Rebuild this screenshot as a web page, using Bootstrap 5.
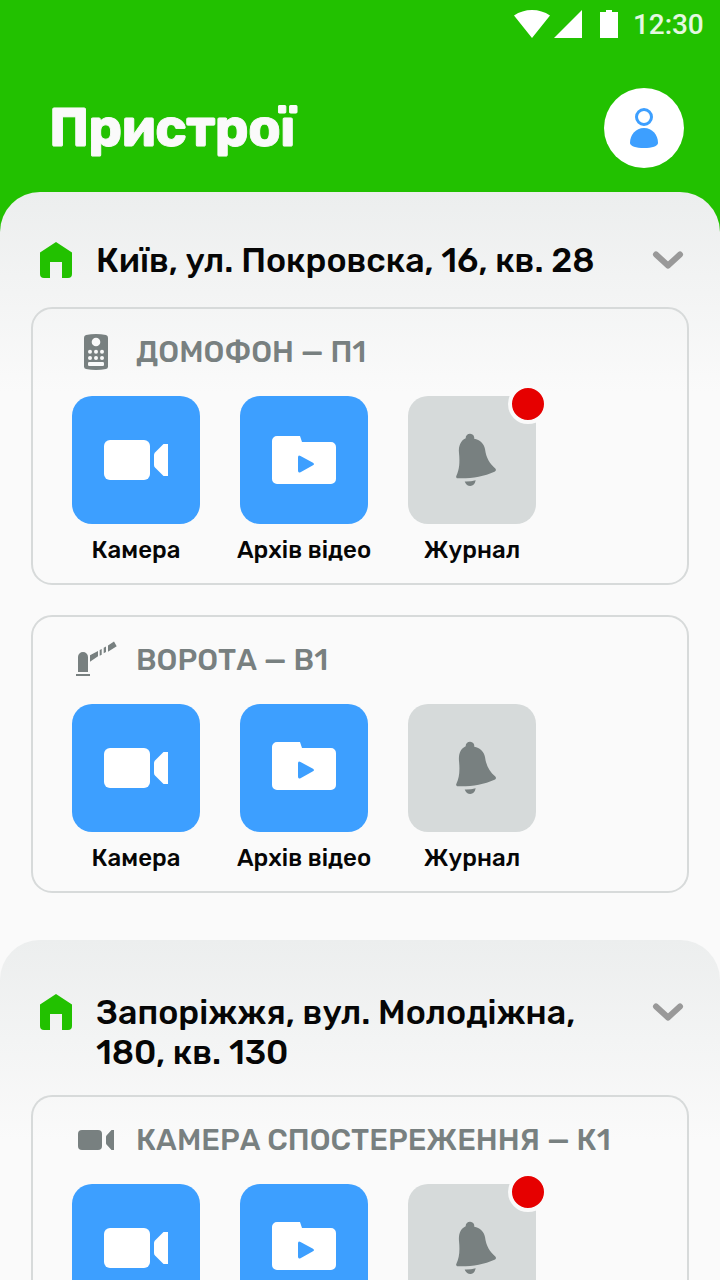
<!DOCTYPE html>
<html lang="uk">
<head>
<meta charset="utf-8">
<meta name="viewport" content="width=device-width, initial-scale=1">
<title>Пристрої</title>
<link href="https://cdn.jsdelivr.net/npm/bootstrap@5.3.0/dist/css/bootstrap.min.css" rel="stylesheet">
<style>
  html, body { height: 1280px; overflow: hidden; }
  body { background: #22c100; font-family: Rubik, Roboto, "Liberation Sans", sans-serif; color: #060606; }
  svg { display: block; flex: none; }
  .status { height: 48px; padding: 0 16px 0 514px; color: #e4f8e0; }
  .clock { font: 500 28px/48px Roboto, sans-serif; margin-left: 15px; letter-spacing: -.1px; padding-top: 1px; white-space: nowrap; }
  .topbar { height: 144px; padding: 16px 36px 0 49px; }
  .title { font-size: 54px; font-weight: 700; line-height: 64px; color: #fafafa; letter-spacing: -.9px; -webkit-text-stroke: .9px #fafafa; }
  .avatar { width: 80px; height: 80px; }
  .place { border-radius: 40px 40px 0 0; padding: 49px 31px 0; background: #fafafa linear-gradient(#eceeee, #fafafa 200px) no-repeat; }
  .first { height: 748px; }
  .under { background: #fafafa; }
  .second { padding-top: 53px; height: 340px; overflow: hidden; }
  .place-head { padding: 0 5px 0 9px; margin-bottom: 26px; }
  .second .place-head { margin-bottom: 22px; }
  .house { margin-top: 1px; }
  .toggle { margin-top: 9px; }
  .address { font-size: 34px; font-weight: 500; line-height: 40px; margin-left: 24px; white-space: nowrap; }
  .device { border: 2px solid #d7dada; border-radius: 21px; height: 278px; padding: 22px 39px 0; margin-bottom: 30px; }
  .second .device { height: 185px; border-bottom: 0; border-radius: 21px 21px 0 0; margin-bottom: 0; overflow: hidden; }
  .kind { font-size: 30px; font-weight: 500; line-height: 42px; height: 42px; color: #788080; margin-left: 16px; white-space: nowrap; }
  .tiles { gap: 40px; margin-top: 23px; }
  .tile { width: 128px; }
  .face { width: 128px; height: 128px; border-radius: 20px; background: #3d9fff; }
  .second .face { height: 96px; border-radius: 20px 20px 0 0; }
  .face.log { background: #d6dada; }
  .dot { width: 40px; height: 40px; right: -12px; top: -12px; border: 4px solid #fafafa; background: #e60000; }
  .caption { font-size: 24px; font-weight: 500; line-height: 28px; margin-top: 12px; white-space: nowrap; }
</style>
</head>
<body>
<svg width="0" height="0" class="position-absolute">
  <defs>
    <symbol id="home" viewBox="0 0 32 36"><path fill="#22c100" d="M16 0 32 10.5V32a4 4 0 0 1-4 4h-6V20H10v16H4a4 4 0 0 1-4-4V10.500Z"/></symbol>
    <symbol id="chevron" viewBox="0 0 32 20"><path d="M4 4.500 16 15.500 28 4.500" fill="none" stroke="#999" stroke-width="6" stroke-linecap="round" stroke-linejoin="round"/></symbol>
    <symbol id="camera" viewBox="0 0 128 128"><rect x="32" y="44" width="46" height="40" rx="6" fill="#fff"/><path fill="#fff" d="M96 48v32h-4.500L83 71.500Q82 70.500 82 69V59Q82 57.500 83 56.500L91.500 48Z"/></symbol>
    <symbol id="folder" viewBox="0 0 128 128"><path fill="#fff" d="M37 40H60L62 46H91a5 5 0 0 1 5 5V83a5 5 0 0 1-5 5H37a5 5 0 0 1-5-5V45a5 5 0 0 1 5-5Z"/><path fill="#3d9fff" d="M58 57.500Q58 54.500 60.500 56L73 62.700Q75 64 73 65.300L60.500 72.200Q58 73.500 58 70.500Z" transform="translate(0 4)"/></symbol>
    <symbol id="bell" viewBox="0 0 128 128"><path fill="#788080" d="M57.700 42.300a4.300 4.300 0 1 1 8.500.500C72 44 76 47.500 77 53c1.200 9 4.500 14.500 10.300 19.500 1.200 1.200.700 2.500-.8 3.200-11 4.900-23 7-36.500 6.600-1.700-.1-2.400-1.300-1.500-2.900C51.300 73.500 52 67 51 57c-.6-7 1.500-12.200 6.700-14.700ZM56.700 85.500Q62.500 85.700 67.700 84.300 66.500 90 62.300 90 58.500 90 56.700 85.500Z"/></symbol>
    <symbol id="intercom" viewBox="0 0 48 42"><path fill="#788080" d="M12 6.500Q12 4.500 14 4Q24 2 34 4Q36 4.500 36 6.500V35.500Q36 37.500 34 38Q24 40 14 38Q12 37.500 12 35.500Z"/><g fill="#f9f9f9"><circle cx="24" cy="11" r="4.300"/><circle cx="18" cy="20.800" r="2"/><circle cx="24" cy="20.800" r="2"/><circle cx="30" cy="20.800" r="2"/><circle cx="18" cy="27" r="2"/><circle cx="24" cy="27" r="2"/><circle cx="30" cy="27" r="2"/><rect x="16" y="31" width="16" height="4" rx="1.300"/></g></symbol>
    <symbol id="barrier" viewBox="0 0 48 42"><path fill="#788080" d="M4 35h14v2H4ZM6 33V18a5 5 0 0 1 10 0V33ZM18 16.300 26 12v5.300L18 22.700ZM27.700 11 29.700 10v5.700L27.700 16.700ZM31.700 8.700 34 7.500v5.600L31.700 14.300ZM36 6.500 42 2.500 44.700 7.300 36 12.700Z"/></symbol>
    <symbol id="cctv" viewBox="0 0 48 42"><rect x="6" y="11" width="24" height="20" rx="4" fill="#788080"/><path fill="#788080" d="M42 11v20h-2.500L34.500 25.500Q34 25 34 24V18Q34 17 34.500 16.500L39.500 11Z"/></symbol>
  </defs>
</svg>

<div class="status d-flex align-items-center">
  <svg width="104" height="48" fill="#fff"><path d="M0 15.500Q8 10 18 10T36 15.500L18 38ZM40 38 68 10V38ZM86 12h6v-2h6v2h6v26H86Z"/></svg>
  <span class="clock">12:30</span>
</div>
<header class="topbar d-flex align-items-center justify-content-between">
  <h1 class="title m-0">Пристрої</h1>
  <div class="avatar rounded-circle bg-white d-flex align-items-center justify-content-center">
    <svg width="80" height="80"><circle cx="40" cy="29" r="7.500" fill="none" stroke="#3d9fff" stroke-width="3"/><path fill="#3d9fff" d="M26 55C26 47 31.500 40 40 40S54 47 54 55C54 58 48 60 40 60S26 58 26 55Z"/></svg>
  </div>
</header>

<main>
  <section class="place first">
    <div class="place-head d-flex align-items-start">
      <svg class="house" width="32" height="36"><use href="#home"/></svg>
      <h2 class="address mb-0">Київ, ул. Покровска, 16, кв. 28</h2>
      <svg class="toggle ms-auto" width="32" height="20"><use href="#chevron"/></svg>
    </div>
    <article class="device">
      <div class="d-flex"><svg width="48" height="42"><use href="#intercom"/></svg><span class="kind">ДОМОФОН — П1</span></div>
      <div class="tiles d-flex">
        <div class="tile d-flex flex-column align-items-center"><div class="face"><svg width="128" height="128"><use href="#camera"/></svg></div><span class="caption">Камера</span></div>
        <div class="tile d-flex flex-column align-items-center"><div class="face"><svg width="128" height="128"><use href="#folder"/></svg></div><span class="caption">Архів відео</span></div>
        <div class="tile d-flex flex-column align-items-center"><div class="face log position-relative"><svg width="128" height="128"><use href="#bell"/></svg><span class="dot rounded-circle position-absolute"></span></div><span class="caption">Журнал</span></div>
      </div>
    </article>
    <article class="device">
      <div class="d-flex"><svg width="48" height="42"><use href="#barrier"/></svg><span class="kind">ВОРОТА — В1</span></div>
      <div class="tiles d-flex">
        <div class="tile d-flex flex-column align-items-center"><div class="face"><svg width="128" height="128"><use href="#camera"/></svg></div><span class="caption">Камера</span></div>
        <div class="tile d-flex flex-column align-items-center"><div class="face"><svg width="128" height="128"><use href="#folder" y="-2"/></svg></div><span class="caption">Архів відео</span></div>
        <div class="tile d-flex flex-column align-items-center"><div class="face log"><svg width="128" height="128"><use href="#bell"/></svg></div><span class="caption">Журнал</span></div>
      </div>
    </article>
  </section>
  <div class="under">
  <section class="place second">
    <div class="place-head d-flex align-items-start">
      <svg class="house" width="32" height="36"><use href="#home"/></svg>
      <h2 class="address mb-0">Запоріжжя, вул. Молодіжна,<br>180, кв. 130</h2>
      <svg class="toggle ms-auto" width="32" height="20"><use href="#chevron"/></svg>
    </div>
    <article class="device">
      <div class="d-flex"><svg width="48" height="42"><use href="#cctv"/></svg><span class="kind">КАМЕРА СПОСТЕРЕЖЕННЯ — К1</span></div>
      <div class="tiles d-flex">
        <div class="tile"><div class="face"><svg width="128" height="96" viewBox="0 0 128 96"><use href="#camera" width="128" height="128"/></svg></div></div>
        <div class="tile"><div class="face"><svg width="128" height="96" viewBox="0 0 128 96"><use href="#folder" y="-2" width="128" height="128"/></svg></div></div>
        <div class="tile"><div class="face log position-relative"><svg width="128" height="96" viewBox="0 0 128 96"><use href="#bell" width="128" height="128"/></svg><span class="dot rounded-circle position-absolute"></span></div></div>
      </div>
    </article>
  </section>
  </div>
</main>
<script src="https://cdn.jsdelivr.net/npm/bootstrap@5.3.0/dist/js/bootstrap.bundle.min.js"></script>
</body>
</html>
